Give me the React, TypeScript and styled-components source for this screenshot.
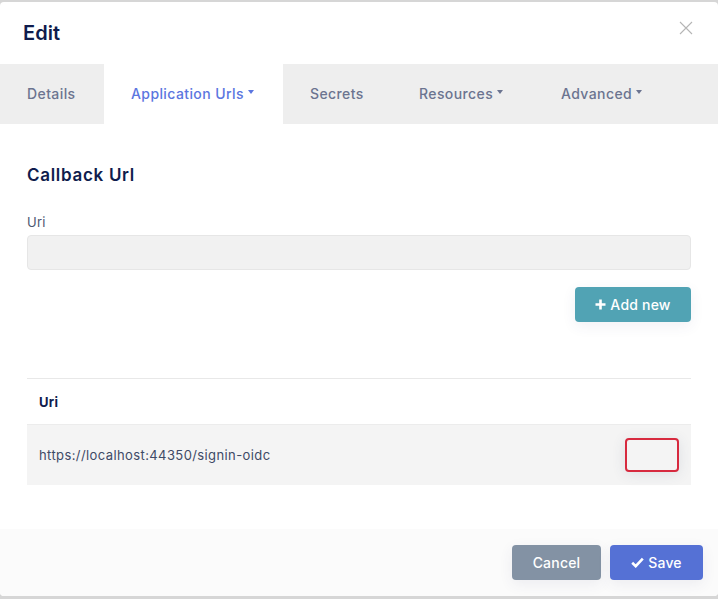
import React from 'react';
import styled, { createGlobalStyle } from 'styled-components';

const GlobalStyle = createGlobalStyle`
  html, body {
    margin: 0;
    padding: 0;
    background: #d6d6d6;
    font-family: Inter, "Noto Sans", sans-serif;
  }
  * { box-sizing: border-box; }
`;

const Modal = styled.div`
  margin-top: 2px;
  width: 718px;
  height: 594px;
  background: #ffffff;
  border-radius: 4px;
  display: flex;
  flex-direction: column;
  overflow: hidden;
`;

const Header = styled.header`
  height: 62px;
  display: flex;
  align-items: center;
  justify-content: space-between;
  padding: 0 23px 0 23px;
`;

const Title = styled.h5`
  margin: 0;
  font-size: 20px;
  font-weight: 600;
  color: #0f1c4d;
  letter-spacing: 0.1px;
`;

const Close = styled.button`
  border: none;
  background: none;
  padding: 0;
  width: 16px;
  height: 16px;
  margin-top: -8px;
  color: #b5b5b5;
  display: flex;
  cursor: pointer;
`;

const Tabs = styled.nav`
  height: 60px;
  background: #eeeeee;
  display: flex;
`;

const Tab = styled.div<{ $active?: boolean; $width: number }>`
  width: ${({ $width }) => $width}px;
  display: flex;
  align-items: center;
  padding: 0 0 2px 27px;
  font-size: 14px;
  font-weight: 500;
  color: ${({ $active }) => ($active ? '#5b76e0' : '#6b7490')};
  background: ${({ $active }) => ($active ? '#ffffff' : 'transparent')};
  letter-spacing: 0.4px;
`;

const Caret = styled.span`
  display: inline-block;
  margin-left: 4px;
  margin-bottom: 2px;
  border-left: 3.5px solid transparent;
  border-right: 3.5px solid transparent;
  border-top: 4px solid currentColor;
`;

const Body = styled.div`
  flex: 1;
  padding: 41px 27px 0 27px;
`;

const SectionTitle = styled.h4`
  margin: 0 0 29px;
  font-size: 17px;
  font-weight: 600;
  color: #0f1c4d;
  letter-spacing: 0.7px;
`;

const Label = styled.label`
  display: block;
  font-size: 13px;
  color: #4b5670;
  margin-bottom: 5px;
  letter-spacing: 0.3px;
`;

const Input = styled.input`
  display: block;
  width: 100%;
  height: 35px;
  background: #f1f1f1;
  border: 1px solid #e6e6e6;
  border-radius: 4px;
  outline: none;
`;

const Actions = styled.div`
  display: flex;
  justify-content: flex-end;
  margin-top: 17px;
`;

const Button = styled.button<{ $color: string; $width: number }>`
  width: ${({ $width }) => $width}px;
  height: 35px;
  border: none;
  border-radius: 4px;
  background: ${({ $color }) => $color};
  color: #ffffff;
  font-family: inherit;
  font-size: 14px;
  font-weight: 500;
  letter-spacing: 0.2px;
  display: flex;
  align-items: center;
  justify-content: center;
  gap: 4px;
  box-shadow: 0 4px 14px rgba(60, 70, 110, 0.08);
`;

const Table = styled.div`
  margin-top: 56px;
  border-top: 1px solid #e8e8e8;
`;

const HeadRow = styled.div`
  height: 46px;
  display: flex;
  align-items: center;
  padding: 0 12px;
  font-size: 13px;
  font-weight: 700;
  color: #0f1c4d;
  letter-spacing: 0.3px;
  border-bottom: 1px solid #ececec;
`;

const Row = styled.div`
  height: 60px;
  background: #f4f4f4;
  display: flex;
  align-items: center;
  justify-content: space-between;
  padding: 0 12px;
  font-size: 13px;
  color: #3e4a66;
  letter-spacing: 0.4px;
`;

const DeleteButton = styled.button`
  width: 54px;
  height: 34px;
  background: #f4f4f4;
  border: 2px solid #d72a3f;
  border-radius: 4px;
  box-shadow: 0 2px 14px rgba(60, 70, 110, 0.12);
`;

const Footer = styled.footer`
  height: 67px;
  background: #fbfbfb;
  display: flex;
  align-items: center;
  justify-content: flex-end;
  gap: 9px;
  padding: 0 15px 0 0;
`;

function App() {
  return (
    <>
      <GlobalStyle />
      <Modal>
        <Header>
          <Title>Edit</Title>
          <Close aria-label="Close">
            <svg width="14" height="14" viewBox="0 0 14 14">
              <path d="M1 1L13 13M13 1L1 13" stroke="currentColor" strokeWidth="1.1" />
            </svg>
          </Close>
        </Header>
        <Tabs>
          <Tab $width={104}>Details</Tab>
          <Tab $width={179} $active>
            Application Urls<Caret />
          </Tab>
          <Tab $width={109}>Secrets</Tab>
          <Tab $width={142}>Resources<Caret /></Tab>
          <Tab $width={146}>Advanced<Caret /></Tab>
        </Tabs>
        <Body>
          <SectionTitle>Callback Url</SectionTitle>
          <Label>Uri</Label>
          <Input />
          <Actions>
            <Button $color="#51a3b4" $width={116}>
              <svg width="11" height="11" viewBox="0 0 11 11">
                <path d="M5.5 0.5V10.5M0.5 5.5H10.5" stroke="#fff" strokeWidth="2.6" />
              </svg>
              Add new
            </Button>
          </Actions>
          <Table>
            <HeadRow>Uri</HeadRow>
            <Row>
              https://localhost:44350/signin-oidc
              <DeleteButton aria-label="Delete" />
            </Row>
          </Table>
        </Body>
        <Footer>
          <Button $color="#8392a4" $width={89}>Cancel</Button>
          <Button $color="#5571d5" $width={93}>
            <svg width="13" height="11" viewBox="0 0 13 11">
              <path d="M1.2 5.8L4.7 9.2L11.8 1.6" stroke="#fff" strokeWidth="2.6" fill="none" />
            </svg>
            Save
          </Button>
        </Footer>
      </Modal>
    </>
  );
}

export default App;
